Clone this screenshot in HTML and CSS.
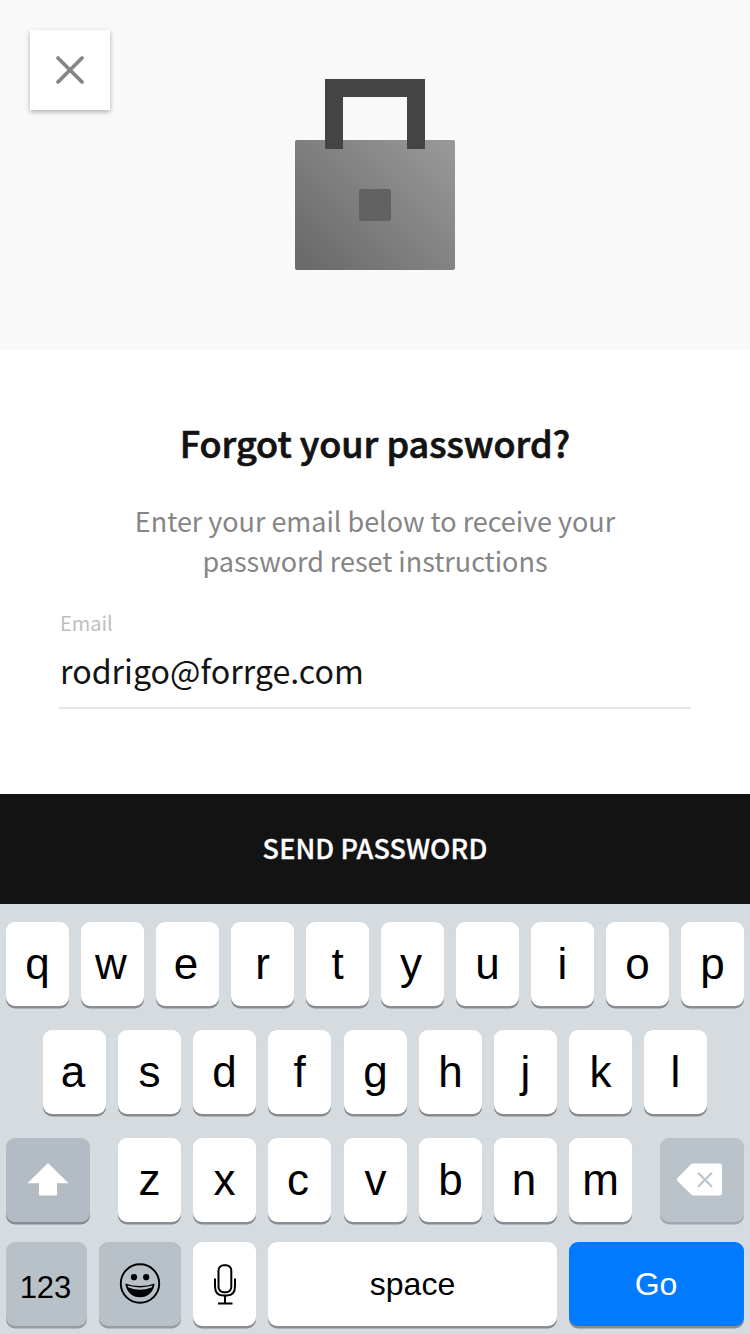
FILE: index.html
```html
<!DOCTYPE html>
<html lang="en">
<head>
<meta charset="utf-8">
<title>Forgot your password?</title>
<link rel="stylesheet" href="styles.css">
</head>
<body>
<main class="screen">
  <header class="hero">
    <button class="close" aria-label="Close">
      <svg width="80" height="80" viewBox="0 0 80 80"><path d="M28 28 52 52M52 28 28 52" fill="none" stroke="#858585" stroke-width="3.8" stroke-linecap="round"/></svg>
    </button>
    <svg class="lock" width="160" height="191" viewBox="0 0 160 191">
      <defs><linearGradient id="body" gradientUnits="userSpaceOnUse" x1="15" y1="191" x2="145" y2="61"><stop offset="0" stop-color="#6a6a6a"/><stop offset="1" stop-color="#979797"/></linearGradient></defs>
      <rect y="61" width="160" height="130" rx="2" fill="url(#body)"/>
      <path d="M30 70V0H130V70H112V18H48V70Z" fill="#444"/>
      <rect x="64" y="110" width="32" height="32" rx="2" fill="#626262"/>
    </svg>
  </header>
  <section class="form">
    <h1 class="title">Forgot your password?</h1>
    <p class="hint">Enter your email below to receive your<br>password reset instructions</p>
    <div class="field">
      <div class="label">Email</div>
      <div class="value">rodrigo@forrge.com</div>
    </div>
  </section>
  <button class="send">SEND PASSWORD</button>
  <section class="keyboard">
    <div class="row">
      <span class="key">q</span><span class="key left">w</span><span class="key left">e</span><span class="key">r</span><span class="key">t</span><span class="key left">y</span><span class="key">u</span><span class="key">i</span><span class="key">o</span><span class="key">p</span>
    </div>
    <div class="row row-home">
      <span class="key left">a</span><span class="key">s</span><span class="key">d</span><span class="key">f</span><span class="key nudge">g</span><span class="key">h</span><span class="key">j</span><span class="key">k</span><span class="key">l</span>
    </div>
    <div class="row row-lower">
      <span class="key shift"><svg width="84" height="84" viewBox="0 0 84 84"><path d="M42 25 62.5 45.3H51V56.5Q51 57.5 50 57.5H34Q33 57.5 33 56.5V45.3H21.5Z" fill="#fff"/></svg></span>
      <span class="key after-shift">z</span><span class="key">x</span><span class="key left">c</span><span class="key nudge">v</span><span class="key">b</span><span class="key left">n</span><span class="key">m</span>
      <span class="key delete"><svg width="84" height="84" viewBox="0 0 84 84"><path d="M33.5 25.5H59.5Q62 25.5 62 28V55Q62 57.5 59.5 57.5H34Q32.3 57.5 31 56.3L17.5 43Q16.2 41.5 17.5 40L30.5 26.8Q31.8 25.5 33.5 25.5Z" fill="#fff"/><path d="M38 34.8 52 48.8M52 34.8 38 48.8" stroke="#bac2ca" stroke-width="2"/></svg></span>
    </div>
    <div class="row row-bottom">
      <span class="key numbers">123</span>
      <span class="key emoji"><svg width="82" height="84" viewBox="0 0 82 84"><circle cx="41" cy="41.5" r="19.2" fill="none" stroke="#000" stroke-width="1.9"/><circle cx="35" cy="35.2" r="3.1"/><circle cx="47.2" cy="35.2" r="3.1"/><path d="M26.3 41.5Q41 46.6 55.7 41.5C54.5 50.5 48.5 55.3 41 55.3S27.5 50.5 26.3 41.5Z"/><path d="M28.4 43.6Q41 47.2 53.6 43.6L52.5 45.5Q41 50 29.5 45.5Z" fill="#b8c0c8"/></svg></span>
      <span class="key mic"><svg width="63" height="84" viewBox="0 0 63 84"><g fill="none" stroke="#000" stroke-width="2"><rect x="25.5" y="23.2" width="12.8" height="27" rx="5.2"/><path d="M22 36.5V44Q22 53.5 30 53.5H34Q42 53.5 42 44V36.5M32 53.5V61.5M25 61.5H39.5"/></g></svg></span>
      <span class="key space">space</span>
      <span class="key go">Go</span>
    </div>
  </section>
</main>
</body>
</html>
```
FILE: styles.css
```css
* { box-sizing: border-box; }
body { margin: 0; background: #fff; }
button { border: 0; padding: 0; }
svg { display: block; }
.screen {
  width: 750px;
  height: 1334px;
  overflow: hidden;
  display: flex;
  flex-direction: column;
  font-family: "Noto Sans CJK SC", "Noto Sans CJK JP", sans-serif;
}
.hero {
  height: 350px;
  flex: none;
  display: grid;
  grid-template-columns: 80px 160px 80px;
  justify-content: space-between;
  align-items: start;
  padding: 30px 30px 0;
  background: #f9f9f9;
}
.close { background: #fff; box-shadow: 0 2px 5px rgba(0, 0, 0, .3); }
.lock { margin-top: 49px; }
.form { height: 444px; flex: none; padding: 62px 59px 0; }
.title {
  margin: 0;
  height: 60px;
  line-height: 60px;
  font-size: 36px;
  font-weight: 500;
  -webkit-text-stroke: .7px #131313;
  color: #131313;
  text-align: center;
  white-space: nowrap;
}
.hint {
  margin: 29px 0 0;
  line-height: 40px;
  font-size: 27px;
  letter-spacing: -.03px;
  color: #858585;
  text-align: center;
  white-space: nowrap;
}
.field { margin-top: 27px; border-bottom: 2px solid #e6e6e6; height: 101px; }
.label { padding-left: 1px; line-height: 30px; font-size: 20px; color: #bebebe; }
.value { padding-left: 1px; margin-top: 7px; line-height: 50px; font-size: 32.2px; color: #131313; }
.send {
  height: 110px;
  flex: none;
  padding-bottom: 4px;
  background: #131313;
  color: #fff;
  font-family: inherit;
  font-size: 27px;
  font-weight: 500;
  letter-spacing: .1px;
  -webkit-text-stroke: .3px #fff;
}
.keyboard {
  height: 430px;
  flex: none;
  padding: 18px 6px 0;
  background: #d6dbdf;
  font-family: "Liberation Sans", Arial, sans-serif;
}
.row { display: flex; gap: 12px; height: 84px; margin-bottom: 24px; }
.row-home { padding-left: 37px; }
.row-lower { margin-bottom: 20px; }
.key {
  width: 63px;
  height: 84px;
  flex: none;
  border-radius: 9px;
  background: #fff;
  box-shadow: 0 2.5px 0 #888b90;
  font-size: 44px;
  line-height: 84px;
  text-align: center;
  color: #000;
}
.left { padding-right: 3px; }
.nudge { margin-left: 1px; }
.shift { width: 84px; background: #b3bbc5; }
.after-shift { margin-left: 16px; }
.delete { width: 84px; margin-left: 16px; background: #bac2ca; box-shadow: 0 2.5px 0 #a3a7ad; }
.numbers, .emoji { background: #b8c0c8; box-shadow: 0 2.5px 0 #989ca1; }
.numbers { width: 81px; font-size: 31px; line-height: 91px; padding-right: 2px; }
.emoji { width: 82px; }
.space { width: 289px; font-size: 32px; }
.go { width: 175px; padding-right: 1px; font-size: 32px; background: #007aff; color: #fff; }
```
